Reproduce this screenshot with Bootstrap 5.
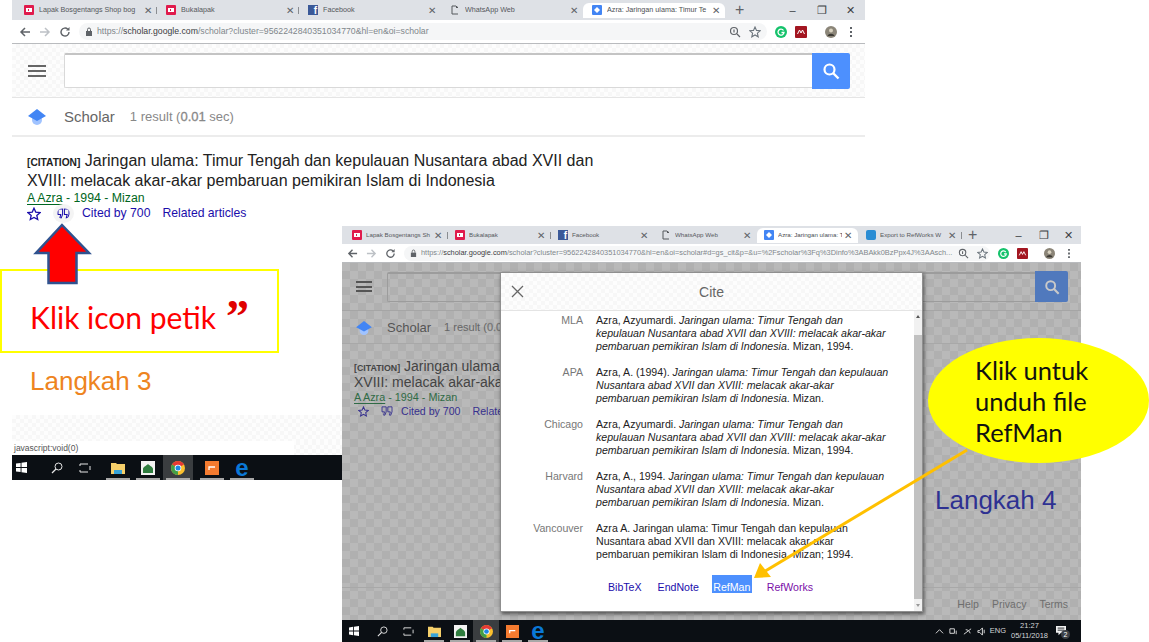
<!DOCTYPE html>
<html lang="en">
  <head>
    <meta charset="UTF-8" />
    <meta name="viewport" content="width=device-width, initial-scale=1" />
    <title>Langkah 3 dan 4</title>
    <link href="https://cdn.jsdelivr.net/npm/bootstrap@5.3.0/dist/css/bootstrap.min.css" rel="stylesheet" />
    <style>
      body {
        margin: 0;
        width: 1149px;
        height: 642px;
        overflow: hidden;
        background: #fff;
        font-family: "Liberation Sans", Arial, sans-serif;
      }
      .slide { width: 1149px; height: 642px; }

      /* browser windows */
      .win-a { left: 12px; top: 0; width: 853px; height: 480px; }
      .win-b { left: 342px; top: 226px; width: 739px; height: 416px; background: #b5b5b5; }

      .tab-strip { background: #dee1e6; flex: none; }
      .win-a .tab-strip { height: 20px; padding-left: 3px; }
      .win-b .tab-strip { height: 18px; padding-left: 3px; }
      .br-tab { flex: none; font-size: 7.2px; color: #55585c; white-space: nowrap; position: relative; padding-left: 9px; }
      .win-a .br-tab { width: 142px; }
      .win-b .br-tab { width: 103px; padding-left: 7px; font-size: 6.2px; }
      .win-b .br-tab.on { width: 101px; margin-right: 1px; }
      .br-tab.on { background: #fff; border-radius: 6px 6px 0 0; color: #4b4e52; }
      .br-tab .tab-name { margin-left: 5px; overflow: hidden; flex: 1 1 0; min-width: 0; }
      .br-tab .tab-x { width: 14px; margin-right: 2px; flex: none; text-align: center; font-size: 10px; color: #5f6368; }
      .win-b .br-tab .tab-name { margin-left: 4px; }
      .win-b .br-tab .tab-x { width: 12px; margin-right: 4px; }
      .br-tab.sep::after { content: ""; position: absolute; right: 0; top: 4px; bottom: 4px; width: 1px; background: #8a8d91; }
      .fav { width: 10px; height: 10px; flex: none; display: block; }
      .fav-fb { background: #3b5998; color: #fff; font: bold 10px/11px "Liberation Sans", sans-serif; text-align: right; padding-right: 1px; overflow: hidden; }
      .tab-plus { font-size: 16px; line-height: 1; color: #5f6368; margin-left: 6px; }
      .win-a .tab-plus { margin-left: 10px; }
      .win-ctrl { color: #3c4043; font-size: 11px; }
      .ctrl-box { width: 29px; text-align: center; display: block; }
      .win-b .ctrl-box { width: 25px; }

      .addr-bar { flex: none; background: #fff; border-bottom: 1px solid #b9bbbe; }
      .win-a .addr-bar { height: 24px; padding: 0 12px 0 7px; }
      .win-b .addr-bar { height: 19px; padding: 0 10px 0 5px; }
      .addr-bar svg { flex: none; display: block; }
      .url-pill { background: #f5f6f7; border-radius: 10px; flex: 1 1 0; min-width: 0; height: 17px; padding-left: 6px; font-size: 8.7px; color: #80868b; white-space: nowrap; overflow: hidden; }
      .win-b .url-pill { height: 15px; font-size: 7.4px; }
      .url-pill b { color: #3c4043; font-weight: normal; }
      .url-text { overflow: hidden; min-width: 0; flex: 0 1 auto; }
      .win-b .url-text { width: 537px; flex: none; }
      .gap-wide { margin-left: 12px; }
      .gap-avatar { margin-left: 18px; }
      .star-gap { margin-right: 6px; }

      /* scholar page */
      .check-light { background: repeating-conic-gradient(#f7f7f7 0 25%, #fdfdfd 0 50%) 0 0 / 8px 8px; }
      .check-grey { background: repeating-conic-gradient(#b0b0b0 0 25%, #b9b9b9 0 50%) 0 0 / 16px 16px; }
      .gs-head { height: 54px; flex: none; border-bottom: 1px solid #e5e5e5; padding-left: 16px; }
      .gs-burger { width: 18px; height: 12px; flex: none; border-top: 2px solid #666; border-bottom: 2px solid #666; position: relative; margin-right: 18px; }
      .gs-burger::after { content: ""; position: absolute; left: 0; right: 0; top: 3px; height: 2px; background: #666; }
      .gs-input { width: 748px; height: 35px; background: #fff; border: 1px solid #d9d9d9; border-top: 2px solid #c4c4c4; border-right: 0; border-radius: 2px 0 0 2px; }
      .gs-go { width: 38px; height: 36px; background: #4d90fe; border-radius: 0 2px 2px 0; flex: none; color: #fff; }
      .gs-sub { height: 39px; flex: none; border-bottom: 2px solid #ececec; padding: 1px 0 0 16px; background: #fff; }
      .gs-word { font-size: 15px; color: #666; margin-left: 18px; }
      .gs-count { font-size: 13px; color: #888; margin-left: 15px; }
      .gs-count b { font-weight: normal; -webkit-text-stroke: 0.3px #888; }
      .gs-result { padding: 14px 0 0 15px; background: #fff; flex: 1 1 0; }
      .gs-title { font-size: 16px; line-height: 19.5px; color: #222; }
      .gs-tag { font-size: 10.2px; line-height: 1; font-weight: bold; color: #222; }
      .gs-meta { font-size: 12.3px; line-height: 15px; color: #006621; margin-top: 1px; }
      .gs-meta u { text-underline-offset: 2px; }
      .gs-links { font-size: 12.2px; line-height: 15px; color: #1a0dab; }
      .quote-on { background: #f4f4f4; box-shadow: 0 0 0 4px #f4f4f4; border-radius: 50%; }
      .gs-foot-a { height: 26px; flex: none; }
      .status-row { height: 14px; flex: none; }
      .status-tip { width: 282px; background: #fff; font-size: 8.5px; color: #555; padding-left: 2px; line-height: 14px; }

      /* win-b is dimmed by the dialog backdrop */
      .win-b .page-b { flex: 1 1 0; min-height: 0; }
      .win-b .gs-head { height: 48px; background: none; border-bottom: 1px solid #a5a5a5; padding-left: 14px; }
      .win-b .gs-burger { width: 16px; height: 11px; margin-right: 15px; border-color: #555; }
      .win-b .gs-burger::after { background: #555; top: 2.5px; }
      .win-b .gs-input { width: 648px; height: 30px; background: none; border-color: #9c9c9c; }
      .win-b .gs-go { width: 33px; height: 31px; background: #5079bd; color: #c9c9c9; }
      .win-b .gs-sub { height: 33px; background: none; border-bottom: 1px solid #a8a8a8; padding: 1px 0 0 14px; }
      .win-b .gs-word { font-size: 13px; color: #555; margin-left: 15px; }
      .win-b .gs-count { font-size: 11px; color: #666; margin-left: 13px; white-space: nowrap; }
      .win-b .gs-result { background: none; padding: 14px 0 0 12px; white-space: nowrap; }
      .win-b .gs-title { font-size: 14px; line-height: 16px; color: #444; }
      .win-b .gs-tag { font-size: 8.8px; color: #444; }
      .win-b .gs-meta { font-size: 10.8px; line-height: 14px; color: #2f6b45; margin-top: 0; }
      .win-b .gs-links { font-size: 10.6px; line-height: 14px; color: #37318e; }
      .gs-foot-b { height: 33px; flex: none; border-top: 1px solid #a8a8a8; font-size: 10.5px; color: #6e6e6e; padding: 9px 13px 0 0; gap: 13px; }

      .task-bar { background: #0b0f14; flex: none; color: #dfe1e3; }
      .win-a .task-bar { height: 25px; }
      .win-b .task-bar { height: 22px; }
      .task-slot { height: 100%; flex: none; position: relative; }
      .task-slot svg { display: block; }
      .task-slot.pinned::after { content: ""; position: absolute; left: 3px; right: 3px; bottom: 0; height: 2px; background: #a8a8a8; }
      .task-slot.live { background: #3a3d40; }
      .win-a .slot-start { width: 36px; padding-left: 4px; }
      .win-a .slot-find { width: 18px; justify-content: center; }
      .win-a .slot-view { width: 37px; justify-content: center; }
      .win-a .slot-app { width: 30px; justify-content: center; }
      .win-b .slot-start { width: 27px; padding-left: 7px; }
      .win-b .slot-find, .win-b .slot-view, .win-b .slot-app { width: 26px; justify-content: center; }
      .edge-e { color: #0a78d7; font: bold 24px/20px "Liberation Sans", sans-serif; }
      .tray-box { padding-right: 15px; gap: 5px; }
      .tray-txt { font-size: 7.5px; line-height: 10px; text-align: center; color: #d5d7d9; white-space: nowrap; }
      .tray-lang { margin-left: -1px; }
      .tray-note { margin-left: 3px; position: relative; }
      .tray-count { position: absolute; right: -4px; bottom: -3px; width: 9px; height: 9px; line-height: 9px; font-size: 7px; text-align: center; border-radius: 50%; background: #3c4046; color: #fff; }

      /* cite dialog */
      .cite-box { left: 158px; top: 46px; width: 423px; height: 340px; background: #fff; box-shadow: 1px 2px 4px rgba(0, 0, 0, 0.55); border: 1px solid #8f8f8f; }
      .cite-top { height: 38px; flex: none; border-bottom: 1px solid #e4e4e4; position: relative; color: #666; font-size: 14px; padding-top: 2px; }
      .cite-close { position: absolute; left: 10px; top: 12px; }
      .cite-body { flex: 1 1 0; min-height: 0; position: relative; padding-top: 3px; }
      .cite-row { height: 52px; font-size: 10.6px; line-height: 13px; color: #222; white-space: nowrap; }
      .cite-name { width: 82px; flex: none; text-align: right; color: #777; }
      .cite-text { margin-left: 13px; }
      .cite-links { font-size: 10.6px; padding: 4px 0 0 107px; line-height: 18px; color: #1a0dab; gap: 16px; align-items: flex-start; }
      .cite-links .refman { background: #4d90fe; color: #fff; width: 40px; text-align: center; margin: -3px -1px 0 -3px; line-height: 19px; padding-top: 3px; height: 18px; overflow: hidden; }
      .cite-links .visited { color: #7a10a8; }
      .cite-scroll { position: absolute; right: 0; top: 0; bottom: 0; width: 8px; background: #f1f1f1; }
      .cite-thumb { position: absolute; left: 0; right: 0; top: 24px; bottom: 12px; background: #c1c1c1; }
      .cite-scroll::before, .cite-scroll::after { content: ""; position: absolute; left: 2px; border-left: 2px solid transparent; border-right: 2px solid transparent; }
      .cite-scroll::before { top: 4px; border-bottom: 3px solid #555; }
      .cite-scroll::after { bottom: 4px; border-top: 3px solid #999; }

      /* slide annotations */
      .note-box { left: 0; top: 269px; width: 279px; height: 84px; background: #fff; border: 2px solid #ffff00; padding: 28px 0 0 28px; font-family: Lato, "Open Sans", sans-serif; font-size: 30px; line-height: 36px; color: #ff0000; white-space: nowrap; }
      .note-mark { left: 226px; top: 294px; font: bold 46px/46px "Liberation Serif", serif; color: #e00000; }
      .step-a { left: 30px; top: 366px; font-size: 26px; line-height: 30px; color: #ee8420; }
      .step-b { left: 935px; top: 485px; font-size: 26px; line-height: 30px; color: #2e3192; }
      .bubble { left: 928px; top: 338px; width: 221px; height: 125px; border-radius: 50%; background: #ffff00; color: #111; font-family: Lato, "Open Sans", sans-serif; font-size: 25.5px; line-height: 31px; padding: 17px 0 0 47px; white-space: nowrap; }
      .over-art { left: 0; top: 0; width: 1149px; height: 642px; pointer-events: none; }
    </style>
  </head>
  <body>
    <svg width="0" height="0" class="position-absolute">
      <defs>
        <symbol id="s-bl" viewBox="0 0 10 10"><rect width="10" height="10" rx="1" fill="#e01b4c" /><rect x="2" y="3" width="6" height="4" fill="#fff" /><rect x="4" y="4" width="1" height="2" fill="#e01b4c" /></symbol>
        <symbol id="s-doc" viewBox="0 0 10 10"><path d="M2 9V1h4l2 2" fill="none" stroke="#55585c" /><path d="M6 1h1l1 2H6z" fill="#55585c" /><path d="M2 9h6" stroke="#55585c" /></symbol>
        <symbol id="s-gs" viewBox="0 0 10 10"><rect width="10" height="10" rx="1" fill="#4285f4" /><path d="M2 5 5 2l3 3-3 3z" fill="#fff" /></symbol>
        <symbol id="s-rw" viewBox="0 0 10 10"><rect width="10" height="10" rx="2" fill="#2a8dd4" /></symbol>
        <symbol id="s-back" viewBox="0 0 12 12"><path d="M11 6H2M6 2 2 6l4 4" fill="none" stroke="#5f6368" stroke-width="1.5" /></symbol>
        <symbol id="s-fwd" viewBox="0 0 12 12"><path d="M1 6h9M6 2l4 4-4 4" fill="none" stroke="#bdc1c6" stroke-width="1.5" /></symbol>
        <symbol id="s-reload" viewBox="0 0 12 12"><path d="M10 6a4 4 0 1 1-1.2-2.8" fill="none" stroke="#5f6368" stroke-width="1.4" /><path d="M10.500 1v3.500H7z" fill="#5f6368" /></symbol>
        <symbol id="s-lock" viewBox="0 0 8 10"><rect x="1" y="4" width="6" height="5" fill="#5f6368" /><path d="M2.500 4V2.500a1.500 1.500 0 0 1 3 0V4" fill="none" stroke="#5f6368" /></symbol>
        <symbol id="s-zoom" viewBox="0 0 12 12"><circle cx="5" cy="5" r="3.500" fill="none" stroke="#5f6368" stroke-width="1.200" /><path d="m8 8 3 3M5 3.500v3" stroke="#5f6368" stroke-width="1.200" /></symbol>
        <symbol id="s-star" viewBox="0 0 12 12"><path d="m6 1 1.500 3.400 3.700.4-2.800 2.400.8 3.600L6 9l-3.200 1.800.8-3.600L.8 4.800l3.700-.4z" fill="none" stroke="currentColor" stroke-width="1.100" /></symbol>
        <symbol id="s-ext-g" viewBox="0 0 12 12"><circle cx="6" cy="6" r="6" fill="#15c26b" /><path d="M8.500 4.500A3 3 0 1 0 9 6.500H6.500" fill="none" stroke="#fff" stroke-width="1.300" /></symbol>
        <symbol id="s-ext-r" viewBox="0 0 12 12"><rect width="12" height="12" rx="1" fill="#a31621" /><path d="m2.500 8 2-4 1.500 3 1.500-3 2 4" fill="none" stroke="#fff" /></symbol>
        <symbol id="s-avatar" viewBox="0 0 12 12"><circle cx="6" cy="6" r="6" fill="#8b8578" /><circle cx="6" cy="4.500" r="2" fill="#d9d2c0" /><path d="M2.500 10c1-3 6-3 7 0" fill="#3c3a34" /></symbol>
        <symbol id="s-dots" viewBox="0 0 4 12"><path d="M1 1h2v2H1zM1 5h2v2H1zM1 9h2v2H1z" fill="#5f6368" /></symbol>
        <symbol id="s-search" viewBox="0 0 18 18"><circle cx="7.500" cy="7.500" r="5" fill="none" stroke="currentColor" stroke-width="2.200" /><path d="m11 11 5.500 5.500" stroke="currentColor" stroke-width="2.400" /></symbol>
        <symbol id="s-gslogo" viewBox="0 0 18 16"><circle cx="9" cy="11" r="5" fill="#a0c3ff" /><path d="M9 0 18 7 9 12 0 7z" fill="#4285f4" /></symbol>
        <symbol id="s-quote" viewBox="0 0 14 12"><path d="M1 1h5v6L4.500 11H3l1-4H1zM8 1h5v6l-1.500 4H10l1-4H8z" fill="none" stroke="currentColor" stroke-width="1.100" /></symbol>
        <symbol id="s-win" viewBox="0 0 12 12"><path d="M0 1.700 5 1v4.500H0zM6 .9 12 0v5.500H6zM0 6.500h5V11l-5-.7zM6 6.500h6V12l-6-.9z" fill="#fff" /></symbol>
        <symbol id="s-find" viewBox="0 0 12 12"><circle cx="7.500" cy="4.500" r="3.500" fill="none" stroke="#e6e6e6" /><path d="M5 7 1 11" stroke="#e6e6e6" stroke-width="1.200" /></symbol>
        <symbol id="s-tasks" viewBox="0 0 12 12"><path d="M1 2h8M1 10h8M1 2v2M1 8v2M11 4v4" stroke="#e6e6e6" fill="none" /></symbol>
        <symbol id="s-folder" viewBox="0 0 14 14"><path d="M0 2h5l1 1h8v10H0z" fill="#f5cf6a" /><path d="M3 9h8v4H3z" fill="#38a3d8" /></symbol>
        <symbol id="s-mosque" viewBox="0 0 14 14"><rect width="14" height="14" fill="#f2f2f2" /><path d="M2 12V8c0-2 3-3 5-5 2 2 5 3 5 5v4z" fill="#2f7d3f" /></symbol>
        <symbol id="s-chrome" viewBox="0 0 14 14"><circle cx="7" cy="7" r="7" fill="#fbc02d" /><path d="M7 7 1 3.500A7 7 0 0 1 13 3.500z" fill="#e53935" /><path d="M7 7 1 3.500A7 7 0 0 0 7 14z" fill="#43a047" /><circle cx="7" cy="7" r="3.300" fill="#fff" /><circle cx="7" cy="7" r="2.500" fill="#1e88e5" /></symbol>
        <symbol id="s-orange" viewBox="0 0 14 14"><rect width="14" height="14" fill="#f47b30" /><path d="M4 9V6h6" fill="none" stroke="#fff" stroke-width="1.300" /></symbol>
        <symbol id="s-up" viewBox="0 0 10 10"><path d="m1 7 4-4 4 4" fill="none" stroke="#e6e6e6" /></symbol>
        <symbol id="s-net" viewBox="0 0 10 10"><path d="M1 2h5v5H1zM8 4v4" fill="none" stroke="#e6e6e6" /></symbol>
        <symbol id="s-link" viewBox="0 0 10 10"><path d="M1 8 9 2M3 3c2 0 4 1 5 4" fill="none" stroke="#e6e6e6" /></symbol>
        <symbol id="s-sound" viewBox="0 0 10 10"><path d="M1 4h2l3-3v8L3 6H1zM8 3v4" fill="none" stroke="#e6e6e6" /></symbol>
        <symbol id="s-bubble" viewBox="0 0 12 12"><path d="M0 0h12v8H6l-3 3V8H0z" fill="#f0f0f0" /><path d="M2 2.500h8M2 5h8" stroke="#0b0f14" /></symbol>
      </defs>
    </svg>

    <div class="slide position-relative">
      <!-- left window, step 3 -->
      <div class="win-a position-absolute d-flex flex-column">
        <div class="tab-strip d-flex align-items-center">
          <div class="br-tab sep d-flex align-items-center"><svg class="fav"><use href="#s-bl" /></svg><span class="tab-name">Lapak Bosgentangs Shop bog</span><span class="tab-x">✕</span></div>
          <div class="br-tab sep d-flex align-items-center"><svg class="fav"><use href="#s-bl" /></svg><span class="tab-name">Bukalapak</span><span class="tab-x">✕</span></div>
          <div class="br-tab d-flex align-items-center"><span class="fav fav-fb">f</span><span class="tab-name">Facebook</span><span class="tab-x">✕</span></div>
          <div class="br-tab d-flex align-items-center"><svg class="fav"><use href="#s-doc" /></svg><span class="tab-name">WhatsApp Web</span><span class="tab-x">✕</span></div>
          <div class="br-tab on d-flex align-items-center"><svg class="fav"><use href="#s-gs" /></svg><span class="tab-name">Azra: Jaringan ulama: Timur Te</span><span class="tab-x">✕</span></div>
          <span class="tab-plus">+</span>
          <div class="win-ctrl ms-auto d-flex"><span class="ctrl-box">–</span><span class="ctrl-box">❐</span><span class="ctrl-box">✕</span></div>
        </div>
        <div class="addr-bar d-flex align-items-center">
          <svg width="12" height="12"><use href="#s-back" /></svg>
          <svg class="ms-2" width="12" height="12"><use href="#s-fwd" /></svg>
          <svg class="ms-2" width="12" height="12"><use href="#s-reload" /></svg>
          <div class="url-pill d-flex align-items-center ms-2">
            <svg class="me-1" width="8" height="10"><use href="#s-lock" /></svg>
            <span class="url-text">https://<b>scholar.google.com</b>/scholar?cluster=9562242840351034770&amp;hl=en&amp;oi=scholar</span>
            <svg class="ms-auto" width="12" height="12"><use href="#s-zoom" /></svg>
            <svg class="ms-2 star-gap text-secondary" width="12" height="12"><use href="#s-star" /></svg>
          </div>
          <svg class="ms-2" width="12" height="12"><use href="#s-ext-g" /></svg>
          <svg class="ms-2" width="12" height="12"><use href="#s-ext-r" /></svg>
          <svg class="gap-avatar" width="12" height="12"><use href="#s-avatar" /></svg>
          <svg class="gap-wide" width="4" height="12"><use href="#s-dots" /></svg>
        </div>
        <div class="gs-head check-light d-flex align-items-center">
          <div class="gs-burger"></div>
          <div class="gs-input"></div>
          <div class="gs-go d-flex align-items-center justify-content-center"><svg width="18" height="18"><use href="#s-search" /></svg></div>
        </div>
        <div class="gs-sub d-flex align-items-center">
          <svg width="18" height="16"><use href="#s-gslogo" /></svg>
          <span class="gs-word">Scholar</span>
          <span class="gs-count">1 result (<b>0.01</b> sec)</span>
        </div>
        <div class="gs-result">
          <div class="gs-title"><span class="gs-tag">[CITATION]</span> Jaringan ulama: Timur Tengah dan kepulauan Nusantara abad XVII dan<br />XVIII: melacak akar-akar pembaruan pemikiran Islam di Indonesia</div>
          <div class="gs-meta"><u>A Azra</u> - 1994 - Mizan</div>
          <div class="gs-links d-flex align-items-center">
            <svg width="14" height="14"><use href="#s-star" /></svg>
            <svg width="13" height="11" class="ms-3 quote-on"><use href="#s-quote" /></svg>
            <span class="gap-wide">Cited by 700</span><span class="gap-wide">Related articles</span>
          </div>
        </div>
        <div class="gs-foot-a check-light"></div>
        <div class="status-row check-light"><div class="status-tip">javascript:void(0)</div></div>
        <div class="task-bar d-flex align-items-stretch">
          <div class="task-slot slot-start d-flex align-items-center"><svg width="11" height="11"><use href="#s-win" /></svg></div>
          <div class="task-slot slot-find d-flex align-items-center"><svg width="12" height="12"><use href="#s-find" /></svg></div>
          <div class="task-slot slot-view d-flex align-items-center"><svg width="12" height="12"><use href="#s-tasks" /></svg></div>
          <div class="task-slot slot-app pinned d-flex align-items-center"><svg width="14" height="14"><use href="#s-folder" /></svg></div>
          <div class="task-slot slot-app pinned d-flex align-items-center"><svg width="14" height="14"><use href="#s-mosque" /></svg></div>
          <div class="task-slot slot-app live pinned d-flex align-items-center"><svg width="14" height="14"><use href="#s-chrome" /></svg></div>
          <div class="task-slot slot-app pinned d-flex align-items-center ms-1"><svg width="14" height="14"><use href="#s-orange" /></svg></div>
          <div class="task-slot slot-app pinned d-flex align-items-center"><span class="edge-e">e</span></div>
        </div>
      </div>

      <!-- step 3 notes -->
      <div class="note-box position-absolute">Klik icon petik</div>
      <div class="note-mark position-absolute">”</div>
      <svg class="position-absolute over-art">
        <path d="M62 225 89 253H76.500V283H48.500V253H36z" fill="#ff0000" stroke="#2f528f" stroke-width="2.500" />
      </svg>
      <div class="step-a position-absolute">Langkah 3</div>

      <!-- right window, step 4 -->
      <div class="win-b position-absolute d-flex flex-column">
        <div class="tab-strip d-flex align-items-center">
          <div class="br-tab sep d-flex align-items-center"><svg class="fav"><use href="#s-bl" /></svg><span class="tab-name">Lapak Bosgentangs Sh</span><span class="tab-x">✕</span></div>
          <div class="br-tab sep d-flex align-items-center"><svg class="fav"><use href="#s-bl" /></svg><span class="tab-name">Bukalapak</span><span class="tab-x">✕</span></div>
          <div class="br-tab d-flex align-items-center"><span class="fav fav-fb">f</span><span class="tab-name">Facebook</span><span class="tab-x">✕</span></div>
          <div class="br-tab d-flex align-items-center"><svg class="fav"><use href="#s-doc" /></svg><span class="tab-name">WhatsApp Web</span><span class="tab-x">✕</span></div>
          <div class="br-tab on d-flex align-items-center"><svg class="fav"><use href="#s-gs" /></svg><span class="tab-name">Azra: Jaringan ulama: T</span><span class="tab-x">✕</span></div>
          <div class="br-tab sep d-flex align-items-center"><svg class="fav"><use href="#s-rw" /></svg><span class="tab-name">Export to RefWorks W</span><span class="tab-x">✕</span></div>
          <span class="tab-plus">+</span>
          <div class="win-ctrl ms-auto d-flex"><span class="ctrl-box">–</span><span class="ctrl-box">❐</span><span class="ctrl-box">✕</span></div>
        </div>
        <div class="addr-bar d-flex align-items-center">
          <svg width="11" height="11"><use href="#s-back" /></svg>
          <svg class="ms-2" width="11" height="11"><use href="#s-fwd" /></svg>
          <svg class="ms-2" width="11" height="11"><use href="#s-reload" /></svg>
          <div class="url-pill d-flex align-items-center ms-2">
            <svg class="me-1" width="7" height="9"><use href="#s-lock" /></svg>
            <span class="url-text">https://<b>scholar.google.com</b>/scholar?cluster=9562242840351034770&amp;hl=en&amp;oi=scholar#d=gs_cit&amp;p=&amp;u=%2Fscholar%3Fq%3Dinfo%3ABAkk0BzPpx4J%3AAsch...</span>
            <svg class="ms-auto" width="11" height="11"><use href="#s-zoom" /></svg>
            <svg class="ms-2 me-1 text-secondary" width="11" height="11"><use href="#s-star" /></svg>
          </div>
          <svg class="ms-2" width="11" height="11"><use href="#s-ext-g" /></svg>
          <svg class="ms-2" width="11" height="11"><use href="#s-ext-r" /></svg>
          <svg class="ms-3" width="11" height="11"><use href="#s-avatar" /></svg>
          <svg class="gap-wide" width="4" height="11"><use href="#s-dots" /></svg>
        </div>
        <div class="page-b check-grey d-flex flex-column">
          <div class="gs-head d-flex align-items-center">
            <div class="gs-burger"></div>
            <div class="gs-input"></div>
            <div class="gs-go d-flex align-items-center justify-content-center"><svg width="16" height="16"><use href="#s-search" /></svg></div>
          </div>
          <div class="gs-sub d-flex align-items-center">
            <svg width="16" height="14"><use href="#s-gslogo" /></svg>
            <span class="gs-word">Scholar</span>
            <span class="gs-count">1 result (<b>0.01</b> sec)</span>
          </div>
          <div class="gs-result">
            <div class="gs-title"><span class="gs-tag">[CITATION]</span> Jaringan ulama<br />XVIII: melacak akar-aka</div>
            <div class="gs-meta"><u>A Azra</u> - 1994 - Mizan</div>
            <div class="gs-links d-flex align-items-center">
              <svg width="11" height="11" class="ms-1"><use href="#s-star" /></svg>
              <svg width="12" height="10" class="gap-wide"><use href="#s-quote" /></svg>
              <span class="ms-2">Cited by 700</span><span class="ms-2 ps-1">Relate</span>
            </div>
          </div>
          <div class="gs-foot-b d-flex justify-content-end"><span>Help</span><span>Privacy</span><span>Terms</span></div>
        </div>
        <div class="task-bar d-flex align-items-stretch">
          <div class="task-slot slot-start d-flex align-items-center"><svg width="10" height="10"><use href="#s-win" /></svg></div>
          <div class="task-slot slot-find d-flex align-items-center"><svg width="11" height="11"><use href="#s-find" /></svg></div>
          <div class="task-slot slot-view d-flex align-items-center"><svg width="11" height="11"><use href="#s-tasks" /></svg></div>
          <div class="task-slot slot-app pinned d-flex align-items-center"><svg width="13" height="13"><use href="#s-folder" /></svg></div>
          <div class="task-slot slot-app pinned d-flex align-items-center"><svg width="13" height="13"><use href="#s-mosque" /></svg></div>
          <div class="task-slot slot-app live pinned d-flex align-items-center"><svg width="13" height="13"><use href="#s-chrome" /></svg></div>
          <div class="task-slot slot-app pinned d-flex align-items-center"><svg width="13" height="13"><use href="#s-orange" /></svg></div>
          <div class="task-slot slot-app pinned d-flex align-items-center"><span class="edge-e">e</span></div>
          <div class="tray-box ms-auto d-flex align-items-center">
            <svg width="9" height="9"><use href="#s-up" /></svg>
            <svg width="9" height="9"><use href="#s-net" /></svg>
            <svg width="9" height="9"><use href="#s-link" /></svg>
            <svg width="9" height="9"><use href="#s-sound" /></svg>
            <span class="tray-txt tray-lang">ENG</span>
            <span class="tray-txt">21:27<br />05/11/2018</span>
            <span class="tray-note"><svg class="d-block" width="10" height="10"><use href="#s-bubble" /></svg><span class="tray-count">2</span></span>
          </div>
        </div>

        <div class="cite-box position-absolute d-flex flex-column">
          <div class="cite-top check-light d-flex align-items-center justify-content-center">
            <svg class="cite-close" width="13" height="13"><path d="M1 1l11 11M12 1 1 12" stroke="#666" stroke-width="1.300" /></svg>
            <span>Cite</span>
          </div>
          <div class="cite-body">
            <div class="cite-row d-flex"><div class="cite-name">MLA</div><div class="cite-text">Azra, Azyumardi. <i>Jaringan ulama: Timur Tengah dan<br />kepulauan Nusantara abad XVII dan XVIII: melacak akar-akar<br />pembaruan pemikiran Islam di Indonesia</i>. Mizan, 1994.</div></div>
            <div class="cite-row d-flex"><div class="cite-name">APA</div><div class="cite-text">Azra, A. (1994). <i>Jaringan ulama: Timur Tengah dan kepulauan<br />Nusantara abad XVII dan XVIII: melacak akar-akar<br />pembaruan pemikiran Islam di Indonesia</i>. Mizan.</div></div>
            <div class="cite-row d-flex"><div class="cite-name">Chicago</div><div class="cite-text">Azra, Azyumardi. <i>Jaringan ulama: Timur Tengah dan<br />kepulauan Nusantara abad XVII dan XVIII: melacak akar-akar<br />pembaruan pemikiran Islam di Indonesia</i>. Mizan, 1994.</div></div>
            <div class="cite-row d-flex"><div class="cite-name">Harvard</div><div class="cite-text">Azra, A., 1994. <i>Jaringan ulama: Timur Tengah dan kepulauan<br />Nusantara abad XVII dan XVIII: melacak akar-akar<br />pembaruan pemikiran Islam di Indonesia</i>. Mizan.</div></div>
            <div class="cite-row d-flex"><div class="cite-name">Vancouver</div><div class="cite-text">Azra A. Jaringan ulama: Timur Tengah dan kepulauan<br />Nusantara abad XVII dan XVIII: melacak akar-akar<br />pembaruan pemikiran Islam di Indonesia. Mizan; 1994.</div></div>
            <div class="cite-links d-flex"><span>BibTeX</span><span>EndNote</span><span class="refman">RefMan</span><span class="visited">RefWorks</span></div>
            <div class="cite-scroll"><div class="cite-thumb"></div></div>
          </div>
        </div>
      </div>

      <!-- step 4 notes -->
      <div class="step-b position-absolute">Langkah 4</div>
      <svg class="position-absolute over-art">
        <path d="M967 450 757 576" stroke="#ffc000" stroke-width="3" />
        <path d="M754 578 771 577 760 563z" fill="#ffc000" />
      </svg>
      <div class="bubble position-absolute">Klik untuk<br />unduh file<br />RefMan</div>
    </div>

    <script src="https://cdn.jsdelivr.net/npm/bootstrap@5.3.0/dist/js/bootstrap.bundle.min.js"></script>
  </body>
</html>
